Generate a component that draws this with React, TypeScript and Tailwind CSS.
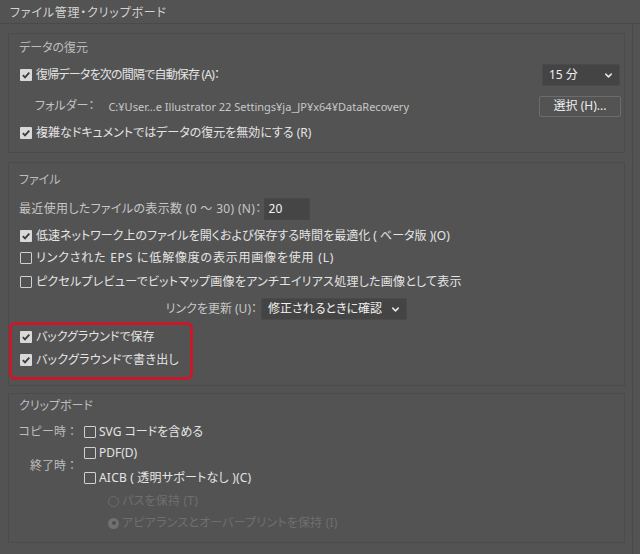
import { ChevronDown } from "lucide-react";
import type { ReactNode } from "react";

const font = "[font-family:'Noto_Sans','Noto_Sans_CJK_JP',sans-serif] [font-feature-settings:'palt']";

function Check({ checked = false }: { checked?: boolean }) {
  if (checked) {
    return (
      <span className="flex h-[12px] w-[12px] shrink-0 items-center justify-center rounded-[1px] bg-[#d9d9d9]">
        <svg width="10" height="10" viewBox="0 0 10 10">
          <path d="M1.8 5.2 L4 7.4 L8.3 2.6" fill="none" stroke="#3b3b3b" strokeWidth="1.8" />
        </svg>
      </span>
    );
  }
  return <span className="h-[12px] w-[12px] shrink-0 rounded-[1px] border border-[#cfcfcf]" />;
}

function Row({
  checked,
  children,
  className = "",
  textClass = "",
}: {
  checked?: boolean;
  children: ReactNode;
  className?: string;
  textClass?: string;
}) {
  return (
    <div className={`flex h-[20px] items-center gap-[4px] pl-[11px] ${className}`}>
      <Check checked={checked} />
      <span className={`whitespace-nowrap text-[#e4e4e4] ${textClass}`}>{children}</span>
    </div>
  );
}

function Radio({ selected = false, children, className = "" }: { selected?: boolean; children: ReactNode; className?: string }) {
  return (
    <div className={`flex h-[20px] items-center gap-[3px] pl-[99px] ${className}`}>
      {selected ? (
        <span className="flex h-[11px] w-[11px] items-center justify-center rounded-full bg-[#717171]">
          <span className="h-[4px] w-[4px] rounded-full bg-[#4e4e4e]" />
        </span>
      ) : (
        <span className="h-[11px] w-[11px] rounded-full border border-[#6c6c6c]" />
      )}
      <span className="whitespace-nowrap tracking-[0.2px] text-[#6f6f6f]">{children}</span>
    </div>
  );
}

function Select({ label, width }: { label: string; width: string }) {
  return (
    <div className={`flex h-[22px] items-center justify-between rounded-[2px] border border-[#4a4a4a] bg-[#444444] pl-[6px] pr-[5px] text-[#f0f0f0] ${width}`}>
      <span className="whitespace-nowrap">{label}</span>
      <ChevronDown size={11} strokeWidth={3.2} color="#e8e8e8" />
    </div>
  );
}

export default function App() {
  return (
    <div className={`relative h-[554px] w-[640px] overflow-hidden bg-[#535353] text-[12px] leading-none ${font}`}>
      <div className="flex h-[24px] items-center border-b border-[#4a4a4a] pl-[10px] pt-[3px] tracking-[0.8px] text-[#d2d2d2]">
        ファイル管理・クリップボード
      </div>

      <div className="h-[530px] w-[633px] border-r border-[#4a4a4a] pl-[8px] pr-[7px] pt-[9px]">
        {/* データの復元 */}
        <section className="flex h-[120px] flex-col border border-[#4b4b4b]">
          <div className="flex h-[28px] shrink-0 items-center pl-[10px] text-[#bdbdbd]">データの復元</div>
          <div className="flex h-[26px] shrink-0 items-center justify-between pr-[4px]">
            <Row checked textClass="tracking-[-0.8px]">
              復帰データを次の間隔で自動保存 (A)：
            </Row>
            <Select label="15 分" width="w-[78px]" />
          </div>
          <div className="mt-[6px] flex h-[24px] shrink-0 items-center justify-between pl-[26px] pr-[3px]">
            <div className="flex items-center gap-[14px] whitespace-nowrap">
              <span className="text-[#c4c4c4]">フォルダー：</span>
              <span className="text-[11px] text-[#c8c8c8]">
                C:¥User...e Illustrator 22 Settings¥ja_JP¥x64¥DataRecovery
              </span>
            </div>
            <div className="flex h-[21px] w-[82px] items-center justify-center rounded-[2px] border border-[#6c6c6c] bg-[#535353] text-[#ececec]">
              選択 (H)...
            </div>
          </div>
          <Row checked className="mt-[5px] shrink-0">
            複雑なドキュメントではデータの復元を無効にする (R)
          </Row>
        </section>

        {/* ファイル */}
        <section className="mt-[9px] flex h-[224px] flex-col border border-[#4b4b4b]">
          <div className="mt-[3px] flex h-[28px] shrink-0 items-center pl-[10px] text-[#bdbdbd]">ファイル</div>
          <div className="mt-[4px] flex h-[22px] shrink-0 items-center gap-[2px] pl-[10px]">
            <span className="whitespace-nowrap tracking-[0.33px] text-[#c6c6c6]">
              最近使用したファイルの表示数 (0 ～ 30) (N)：
            </span>
            <span className="flex h-[22px] w-[46px] items-center border border-[#484848] bg-[#454545] pl-[4px] text-[#f2f2f2]">
              20
            </span>
          </div>
          <Row checked className="mt-[6px] shrink-0">
            低速ネットワーク上のファイルを開くおよび保存する時間を最適化 ( ベータ版 )(O)
          </Row>
          <Row className="mt-[2px] shrink-0" textClass="tracking-[0.8px]">
            リンクされた EPS に低解像度の表示用画像を使用 (L)
          </Row>
          <Row className="mt-[4px] shrink-0" textClass="tracking-[0.24px]">
            ピクセルプレビューでビットマップ画像をアンチエイリアス処理した画像として表示
          </Row>
          <div className="mt-[6px] flex h-[22px] shrink-0 items-center">
            <span className="w-[252px] whitespace-nowrap pr-[4px] text-right text-[#c6c6c6]">リンクを更新 (U)：</span>
            <Select label="修正されるときに確認" width="w-[146px]" />
          </div>
          <Row checked className="mt-[7px] shrink-0">
            バックグラウンドで保存
          </Row>
          <Row checked className="mt-[3px] shrink-0" textClass="tracking-[0.3px]">
            バックグラウンドで書き出し
          </Row>
        </section>

        {/* クリップボード */}
        <section className="mt-[7px] flex h-[150px] flex-col border border-[#4b4b4b]">
          <div className="flex h-[24px] shrink-0 items-center pl-[10px] text-[#bdbdbd]">クリップボード</div>
          <div className="mt-[4px] flex h-[20px] shrink-0 items-center">
            <span className="w-[73px] whitespace-nowrap pr-[4px] text-right text-[#bdbdbd] [font-feature-settings:normal]">
              コピー時：
            </span>
            <div className="ml-[2px] flex items-center gap-[3px]">
              <Check />
              <span className="whitespace-nowrap text-[#e4e4e4]">SVG コードを含める</span>
            </div>
          </div>
          <div className="mt-[1px] flex shrink-0 items-center">
            <span className="w-[73px] whitespace-nowrap pr-[4px] text-right text-[#bdbdbd] [font-feature-settings:normal]">
              終了時：
            </span>
            <div className="ml-[2px] flex flex-col">
              <div className="flex h-[20px] items-center gap-[3px]">
                <Check />
                <span className="whitespace-nowrap text-[#e4e4e4]">PDF(D)</span>
              </div>
              <div className="mt-[5px] flex h-[20px] items-center gap-[3px]">
                <Check />
                <span className="whitespace-nowrap tracking-[0.2px] text-[#e4e4e4]">AICB ( 透明サポートなし )(C)</span>
              </div>
            </div>
          </div>
          <Radio className="mt-[3px] shrink-0">パスを保持 (T)</Radio>
          <Radio selected className="mt-[2px] shrink-0">
            アピアランスとオーバープリントを保持 (I)
          </Radio>
        </section>
      </div>

      {/* 注釈の赤枠 */}
      <div className="pointer-events-none absolute left-[9px] top-[322px] h-[58px] w-[184px] rounded-[6px] border-[3px] border-[#c8182a]" />
    </div>
  );
}
